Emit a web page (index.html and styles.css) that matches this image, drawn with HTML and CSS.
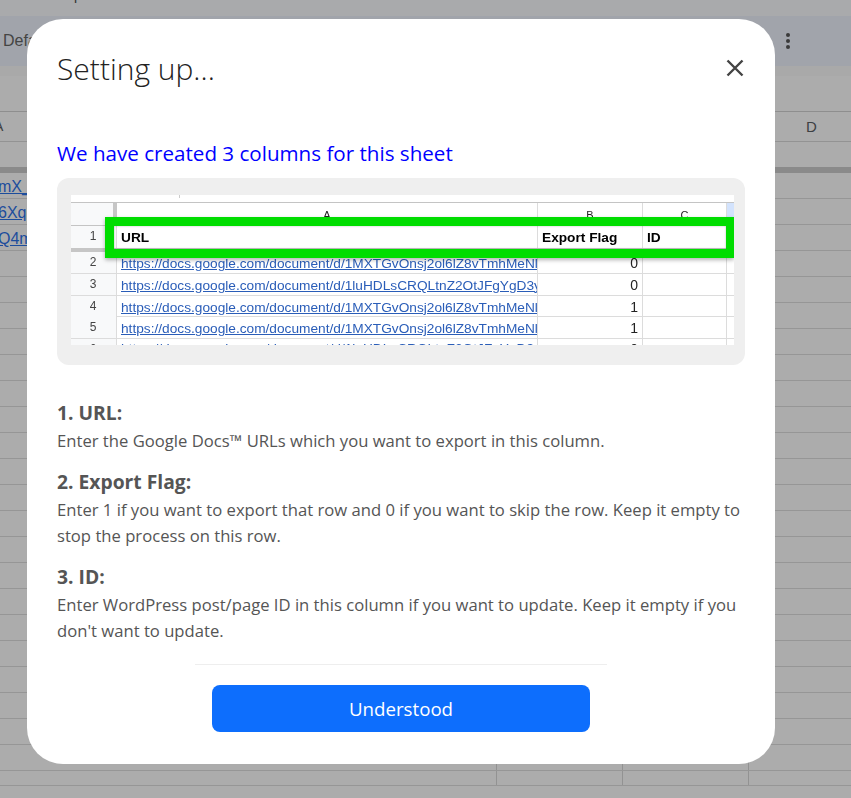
FILE: index.html
```html
<!DOCTYPE html>
<html>
<head>
    <title>Setting up</title>
    <link rel="stylesheet" href="styles.css">
</head>
<body>
    <div class="page">
        <div class="menubar"><span>Help</span></div>
        <div class="toolbar">
            <span class="toolbar-font">Default</span>
            <svg class="kebab" width="6" height="18" viewBox="0 0 6 18"><circle cx="3" cy="3" r="2"/><circle cx="3" cy="9" r="2"/><circle cx="3" cy="15" r="2"/></svg>
        </div>
        <div class="formula-bar"></div>
        <div class="col-heads">
            <div class="bg-a"><span class="clip-a">A</span></div>
            <div></div><div></div><div></div><div class="bg-d">D</div>
        </div>
        <div class="bg-row bg-row-first"></div>
        <div class="bg-row"><a class="bg-link">mX_docs</a></div>
        <div class="bg-row"><a class="bg-link">6Xqdocs</a></div>
        <div class="bg-row"><a class="bg-link">Q4mdocs</a></div>
        <div class="bg-row"></div><div class="bg-row"></div><div class="bg-row"></div><div class="bg-row"></div>
        <div class="bg-row"></div><div class="bg-row"></div><div class="bg-row"></div><div class="bg-row"></div>
        <div class="bg-row"></div><div class="bg-row"></div><div class="bg-row"></div><div class="bg-row"></div>
        <div class="bg-row"></div><div class="bg-row"></div><div class="bg-row"></div><div class="bg-row"></div>
        <div class="bg-row"></div><div class="bg-row"></div><div class="bg-row"></div>
        <div class="bg-row bg-cols"></div>
        <div class="bg-row bg-cols bg-row-last"></div>
    </div>

    <div class="modal">
        <div class="modal-header">
            <h1 class="modal-title">Setting up...</h1>
            <svg class="close-icon" width="18" height="18" viewBox="0 0 18 18"><path d="M1.5 1.5L16.5 16.5M16.5 1.5L1.5 16.5"/></svg>
        </div>

        <h2 class="lead">We have created 3 columns for this sheet</h2>

        <div class="preview">
            <div class="sheet">
                <div class="sheet-top"></div>
                <div class="sheet-row sheet-heads">
                    <div class="rownum"></div>
                    <div class="cell center">A</div>
                    <div class="cell center">B</div>
                    <div class="cell center">C</div>
                    <div class="sheet-scroll"></div>
                </div>
                <div class="sheet-row sheet-names">
                    <div class="rownum">1</div>
                    <div class="cell strong">URL</div>
                    <div class="cell strong">Export Flag</div>
                    <div class="cell strong">ID</div>
                </div>
                <div class="sheet-row">
                    <div class="rownum">2</div>
                    <div class="cell"><a class="sheet-link">https://docs.google.com/document/d/1MXTGvOnsj2ol6lZ8vTmhMeNlxQ</a></div>
                    <div class="cell num">0</div>
                    <div class="cell"></div>
                </div>
                <div class="sheet-row">
                    <div class="rownum">3</div>
                    <div class="cell"><a class="sheet-link">https://docs.google.com/document/d/1luHDLsCRQLtnZ2OtJFgYgD3yxQ</a></div>
                    <div class="cell num">0</div>
                    <div class="cell"></div>
                </div>
                <div class="sheet-row">
                    <div class="rownum">4</div>
                    <div class="cell"><a class="sheet-link">https://docs.google.com/document/d/1MXTGvOnsj2ol6lZ8vTmhMeNlxQ</a></div>
                    <div class="cell num">1</div>
                    <div class="cell"></div>
                </div>
                <div class="sheet-row">
                    <div class="rownum">5</div>
                    <div class="cell"><a class="sheet-link">https://docs.google.com/document/d/1MXTGvOnsj2ol6lZ8vTmhMeNlxQ</a></div>
                    <div class="cell num">1</div>
                    <div class="cell"></div>
                </div>
                <div class="sheet-row sheet-cut">
                    <div class="rownum">6</div>
                    <div class="cell"><a class="sheet-link">https://docs.google.com/document/d/1luHDLsCRQLtnZ2OtJFgYgD3yxQ</a></div>
                    <div class="cell num">0</div>
                    <div class="cell"></div>
                </div>
                <div class="highlight"></div>
            </div>
        </div>

        <div class="steps">
            <h3>1. URL:</h3>
            <p>Enter the Google Docs™ URLs which you want to export in this column.</p>
            <h3>2. Export Flag:</h3>
            <p>Enter 1 if you want to export that row and 0 if you want to skip the row. Keep it empty to stop the process on this row.</p>
            <h3>3. ID:</h3>
            <p>Enter WordPress post/page ID in this column if you want to update. Keep it empty if you don't want to update.</p>
        </div>

        <div class="modal-footer">
            <button class="understood" type="button">Understood</button>
        </div>
    </div>
</body>
</html>
```

FILE: styles.css
```css
html, body {
    margin: 0;
    height: 100%;
    overflow: hidden;
}
body {
    background-color: #acacac;
    font-family: "Open Sans", "Noto Sans", sans-serif;
    position: relative;
}

/* spreadsheet behind the dialog */
.page {
    height: 798px;
    overflow: hidden;
    font-family: "Liberation Sans", Arial, sans-serif;
}
.menubar {
    height: 16px;
    background-color: #a9aaac;
    overflow: hidden;
    padding-left: 53px;
    font-size: 14px;
    line-height: 16px;
    color: #333;
}
.menubar span {
    display: block;
    margin-top: -13px;
}
.toolbar {
    height: 50px;
    background-color: #a1a4ab;
    display: flex;
    align-items: center;
    justify-content: space-between;
    padding: 0 60px 0 3px;
    font-size: 16px;
    color: #444;
}
.kebab {
    fill: #3a3a3a;
}
.formula-bar {
    height: 45px;
    background: linear-gradient(#a9a9a9 10px, #acacac 10px);
    border-bottom: 1px solid #8e8e8e;
}
.col-heads {
    height: 29px;
    display: grid;
    grid-template-columns: 496px 126px 126px 126px 1fr;
    border-bottom: 1px solid #939393;
    font-size: 14px;
    line-height: 29px;
    color: #3c4043;
    overflow: hidden;
}
.bg-d {
    position: absolute;
    left: 806px;
    font-size: 15px;
}
.clip-a {
    margin-left: -6px;
}
.bg-row {
    height: 25px;
    border-bottom: 1px solid #969696;
    overflow: hidden;
}
.bg-row-first {
    height: 25px;
    border-bottom: 6px solid #8a8a8a;
}
.bg-link {
    display: block;
    margin-left: -2px;
    font-size: 16px;
    line-height: 27px;
    color: #1c4d9c;
    text-decoration: underline;
}
.bg-cols {
    background-image:
        linear-gradient(#929292, #929292),
        linear-gradient(#929292, #929292),
        linear-gradient(#929292, #929292);
    background-size: 1px 100%;
    background-repeat: no-repeat;
    background-position: 496px 0, 622px 0, 748px 0;
}
.bg-row-last {
    height: 14px;
}

/* dialog */
.modal {
    position: absolute;
    left: 27px;
    top: 19px;
    width: 748px;
    height: 745px;
    box-sizing: border-box;
    padding: 0 30px;
    background-color: #fff;
    border-radius: 36px;
}
.modal-header {
    display: flex;
    justify-content: space-between;
    align-items: center;
    height: 98px;
}
.modal-title {
    margin: 0;
    font-family: "Open Sans", sans-serif;
    font-size: 30px;
    font-weight: 300;
    color: #222;
}
.close-icon {
    margin-right: 1px;
    fill: none;
    stroke: #444;
    stroke-width: 2.4;
}
.lead {
    margin: 19px 0 8px;
    font-size: 20.6px;
    line-height: 34px;
    font-weight: 400;
    color: #0000ff;
}
.preview {
    background-color: #efefef;
    border-radius: 12px;
    height: 187px;
    box-sizing: border-box;
    padding: 17px 11px 20px 14px;
}

/* picture of the sheet */
.sheet {
    position: relative;
    height: 150px;
    overflow: hidden;
    background-color: #fff;
    font-family: "Liberation Sans", Arial, sans-serif;
    font-size: 13.7px;
    color: #222;
    filter: blur(0.3px);
}
.sheet-top {
    height: 7px;
    border-bottom: 1px solid #c4c4c4;
    background: linear-gradient(#ccc, #ccc) no-repeat 108px 0 / 1px 3px;
}
.sheet-row {
    display: grid;
    grid-template-columns: 46px 421px 105px 84px 7px;
    height: 21.75px;
    box-sizing: border-box;
    border-bottom: 1px solid #dcdcdc;
}
.sheet-heads {
    height: 23px;
    border-bottom-color: #c4c4c4;
}
.sheet-names {
    border-bottom: 4px solid #c6c6c6;
    height: 26px;
}
.rownum {
    background-color: #f8f9fa;
    border-right: 1px solid #dcdcdc;
    text-align: center;
    font-size: 12px;
    line-height: 21px;
    color: #444;
    padding-right: 1px;
}
.sheet-heads .rownum {
    border-right: 4px solid #c6c6c6;
}
.cell {
    border-right: 1px solid #dcdcdc;
    padding: 0 0 0 4px;
    line-height: 23px;
    white-space: nowrap;
    overflow: hidden;
}
.sheet-cut .cell {
    line-height: 20px;
}
.center {
    text-align: center;
    font-size: 11px;
    line-height: 25px;
    padding: 0;
}
.strong {
    font-weight: 700;
    color: #000;
}
.num {
    text-align: right;
    padding-right: 4px;
    font-size: 14px;
}
.sheet-link {
    font-size: 13.7px;
    color: #2a5db8;
    text-decoration: underline;
}
.sheet-scroll {
    background-color: #d3e3fd;
}
.highlight {
    position: absolute;
    left: 34px;
    top: 22px;
    width: 629px;
    height: 41px;
    box-sizing: border-box;
    border: solid #00dd00;
    border-width: 9px 8px 9px 9px;
    box-shadow: 0 2px 4px rgba(0, 0, 0, 0.3), inset 0 0 2px rgba(0, 0, 0, 0.3);
}

.steps {
    margin-top: 33px;
    color: #555;
    font-size: 16.65px;
    line-height: 26px;
}
.steps h3 {
    margin: 0;
    font-size: 19.3px;
    line-height: 30px;
    font-weight: 700;
}
.steps p {
    margin: 0 0 13px;
}
.modal-footer {
    margin: 20px auto 0;
    width: 412px;
    border-top: 1px solid #eee;
    padding-top: 20px;
    display: flex;
    justify-content: center;
}
.understood {
    width: 378px;
    height: 47px;
    background-color: #0d6efd;
    color: white;
    border: none;
    border-radius: 8px;
    font-family: "Open Sans", sans-serif;
    font-size: 18.7px;
}
```
